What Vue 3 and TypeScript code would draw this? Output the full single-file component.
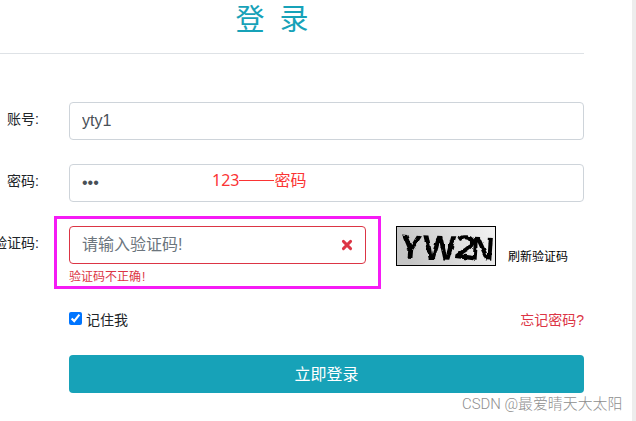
<script setup lang="ts">
import { ref } from 'vue'

interface Glyph {
  char: string
  x: number
  y: number
  size: number
  width: number
  turn: number
}

const account = ref('yty1')
const password = ref('123')
const code = ref('')
const remember = ref(true)

const captcha: Glyph[] = [
  { char: 'Y', x: 4, y: 32, size: 33, width: 20, turn: 5 },
  { char: 'W', x: 26, y: 32, size: 33, width: 33, turn: 2 },
  { char: '2', x: 58, y: 32, size: 33, width: 21, turn: 7 },
  { char: 'N', x: 74, y: 33, size: 32, width: 24, turn: 4 },
]
</script>

<template>
  <main class="page">
    <form class="login" @submit.prevent>
      <h1 class="title"><span>登</span><span>录</span></h1>

      <div class="row">
        <label class="label" for="account">账号:</label>
        <input id="account" v-model="account" class="control" type="text" />
      </div>

      <div class="row">
        <label class="label" for="password">密码:</label>
        <div class="field">
          <input id="password" v-model="password" class="control" type="password" />
          <span class="note">123<i class="dash"></i>密码</span>
        </div>
      </div>

      <div class="row code-row">
        <label class="label" for="code">验证码:</label>
        <div class="code-field">
          <input id="code" v-model="code" class="control invalid" type="text" placeholder="请输入验证码!" />
          <svg class="cross" viewBox="0 0 12 12" aria-hidden="true">
            <path d="M2.4 2.4 9.6 9.6M9.6 2.4 2.4 9.6" />
          </svg>
          <p class="feedback">验证码不正确<span class="bang">!</span></p>
          <div class="highlight"></div>
        </div>
        <svg class="captcha" viewBox="0 0 98 38">
          <defs>
            <linearGradient id="shade" x1="0" x2="1" y1="0.2" y2="0">
              <stop offset="0" stop-color="#c5c5c5" />
              <stop offset="1" stop-color="#f3f3f3" />
            </linearGradient>
            <filter id="ripple" x="-5%" y="-10%" width="110%" height="120%" color-interpolation-filters="sRGB">
              <feTurbulence type="fractalNoise" baseFrequency="0.2" numOctaves="1" seed="4" result="n" />
              <feDisplacementMap in="SourceGraphic" in2="n" scale="3.5" xChannelSelector="R" yChannelSelector="G" />
              <feGaussianBlur stdDeviation="0.7" />
            </filter>
          </defs>
          <rect width="98" height="38" fill="url(#shade)" />
          <g filter="url(#ripple)">
            <text
              v-for="g in captcha"
              :key="g.char"
              :x="g.x"
              :y="g.y"
              :font-size="g.size"
              :textLength="g.width"
              lengthAdjust="spacingAndGlyphs"
              :transform="`rotate(${g.turn} ${g.x + 10} 20)`"
            >{{ g.char }}</text>
          </g>
        </svg>
        <a class="refresh">刷新验证码</a>
      </div>

      <div class="options">
        <label class="remember"><input v-model="remember" type="checkbox" />记住我</label>
        <a class="forgot">忘记密码?</a>
      </div>

      <button class="submit" type="submit">立即登录</button>
    </form>
    <div class="watermark">CSDN @最爱晴天大太阳</div>
  </main>
</template>

<style>
body {
  margin: 0;
  overflow: hidden;
}
</style>

<style scoped>
* {
  box-sizing: border-box;
}

.page {
  position: relative;
  width: 636px;
  height: 421px;
  overflow: hidden;
  border-right: 4px solid #ededed;
  background: #fff;
  color: #212529;
  font-family: "Liberation Sans", "Noto Sans CJK SC", sans-serif;
  font-size: 14px;
}

.login {
  width: 584px;
}

.title {
  display: flex;
  justify-content: center;
  gap: 15px;
  height: 54px;
  margin: 0 0 48px;
  border-bottom: 1px solid #dee2e6;
  color: #17a2b8;
  font-size: 29px;
  font-weight: 400;
  line-height: 41px;
}

.title span:first-child {
  margin-left: -40px;
}

.row {
  display: flex;
  align-items: flex-start;
  height: 38px;
  margin-bottom: 24px;
}

.label {
  flex: none;
  display: flex;
  justify-content: flex-end;
  width: 69px;
  padding-right: 30px;
  line-height: 34px;
  white-space: nowrap;
}

.field,
.code-field {
  position: relative;
  flex: 1;
}

.code-field {
  flex: none;
  width: 297px;
}

.control {
  display: block;
  flex: 1;
  width: 100%;
  min-width: 0;
  height: 38px;
  margin: 0;
  padding: 6px 12px;
  border: 1px solid #ced4da;
  border-radius: 4px;
  outline: 0;
  background: #fff;
  color: #495057;
  font-family: inherit;
  font-size: 16px;
}

.control::placeholder {
  color: #6c757d;
  opacity: 1;
}

.control.invalid {
  border-color: #dc3545;
}

.note {
  position: absolute;
  left: 143px;
  top: 4px;
  display: flex;
  align-items: center;
  color: #fb3434;
  font-family: "Noto Sans", "Noto Sans CJK SC", sans-serif;
  font-size: 16px;
  line-height: 24px;
}

.dash {
  width: 35px;
  height: 1px;
  background: currentColor;
}

.cross {
  position: absolute;
  left: 272px;
  top: 13px;
  width: 12px;
  height: 12px;
  fill: none;
  stroke: #dc3545;
  stroke-width: 2.9;
  stroke-linecap: round;
}

.feedback {
  margin: 4px 0 0;
  color: #dc3545;
  font-size: 12px;
  line-height: 18px;
}

.bang {
  margin-left: 1px;
}

.highlight {
  position: absolute;
  left: -15px;
  top: -10px;
  width: 327px;
  height: 73px;
  border: 3px solid #f51bf5;
  pointer-events: none;
}

.captcha {
  flex: none;
  width: 100px;
  height: 40px;
  margin-left: 30px;
  border: 1px solid #000;
  font-family: "Open Sans", sans-serif;
  font-weight: 700;
}

.refresh {
  margin: 22px 0 0 12px;
  color: #000;
  font-size: 12px;
  line-height: 18px;
}

.options {
  display: flex;
  justify-content: space-between;
  height: 20px;
  margin: 46px 0 25px 69px;
  line-height: 20px;
}

.remember {
  display: flex;
  gap: 4px;
}

.remember input {
  width: 13px;
  height: 13px;
  margin: 2px 0 0;
}

.forgot {
  color: #dc3545;
}

.submit {
  display: block;
  width: 515px;
  height: 38px;
  margin-left: 69px;
  padding: 0 0 3px;
  border: 0;
  border-radius: 4px;
  background: #17a2b8;
  color: #fff;
  font-family: inherit;
  font-size: 16px;
}

.watermark {
  position: absolute;
  left: 462px;
  top: 394px;
  color: #8e8e8e;
  font-family: Roboto, "Noto Sans CJK SC", sans-serif;
  font-size: 14.9px;
  font-weight: 300;
  line-height: 20px;
  white-space: nowrap;
}
</style>
